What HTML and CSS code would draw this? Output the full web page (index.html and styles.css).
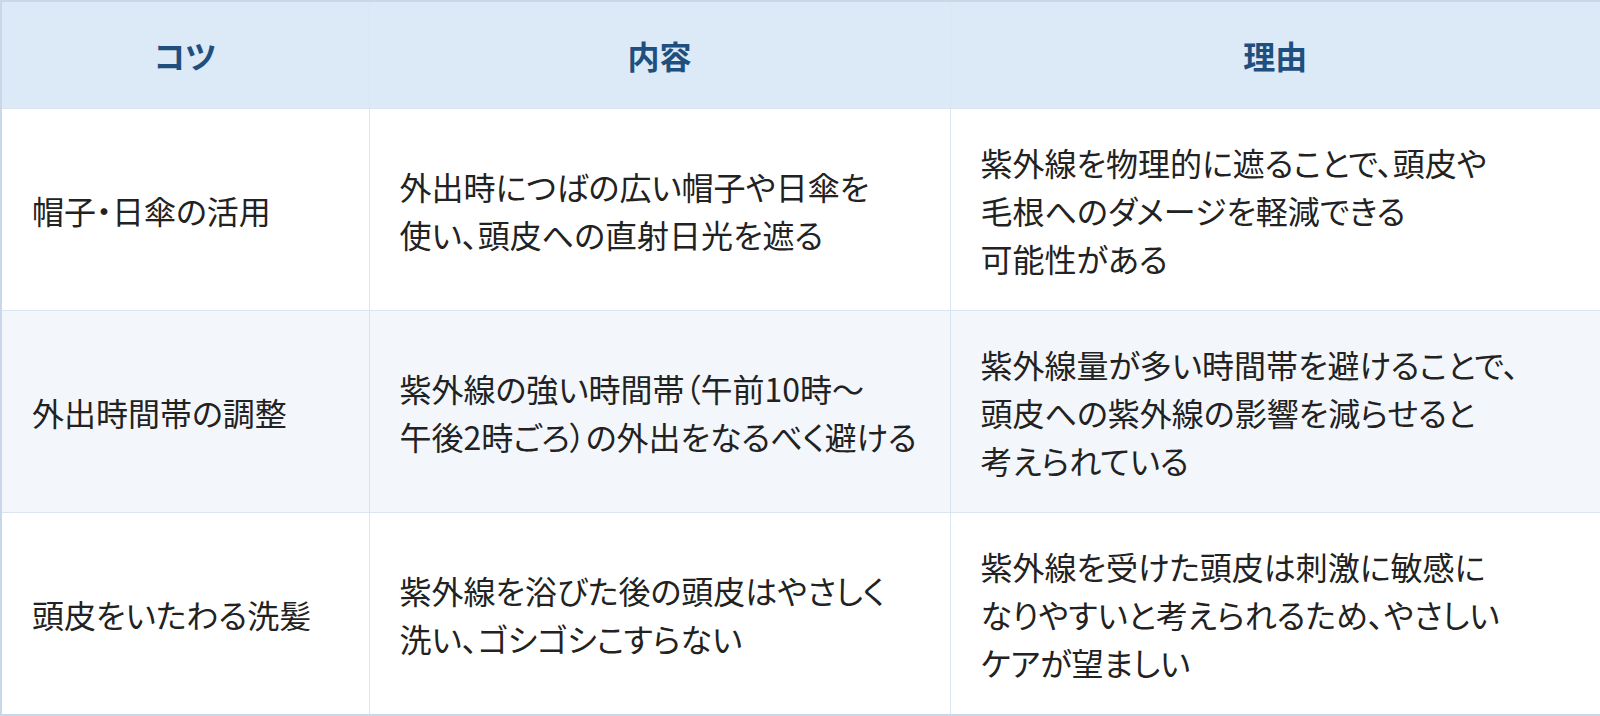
FILE: index.html
```html
<!DOCTYPE html>
<html lang="ja">
<head>
<meta charset="utf-8">
<link rel="stylesheet" href="styles.css">
</head>
<body>
<table class="tips">
  <colgroup>
    <col class="c1">
    <col class="c2">
    <col class="c3">
  </colgroup>
  <thead>
    <tr>
      <th>コツ</th>
      <th>内容</th>
      <th>理由</th>
    </tr>
  </thead>
  <tbody>
    <tr>
      <td>帽子・日傘の活用</td>
      <td>外出時につばの広い帽子や日傘を<br>使い、頭皮への直射日光を遮る</td>
      <td>紫外線を物理的に遮ることで、頭皮や<br>毛根へのダメージを軽減できる<br>可能性がある</td>
    </tr>
    <tr class="alt">
      <td>外出時間帯の調整</td>
      <td>紫外線の強い時間帯（午前10時～<br>午後2時ごろ）の外出をなるべく避ける</td>
      <td>紫外線量が多い時間帯を避けることで、<br>頭皮への紫外線の影響を減らせると<br>考えられている</td>
    </tr>
    <tr>
      <td>頭皮をいたわる洗髪</td>
      <td>紫外線を浴びた後の頭皮はやさしく<br>洗い、ゴシゴシこすらない</td>
      <td>紫外線を受けた頭皮は刺激に敏感に<br>なりやすいと考えられるため、やさしい<br>ケアが望ましい</td>
    </tr>
  </tbody>
</table>
</body>
</html>
```
FILE: styles.css
```css
html, body {
  margin: 0;
  padding: 0;
  background: #ffffff;
}

.tips {
  width: 1600px;
  border-collapse: collapse;
  table-layout: fixed;
  font-family: "Noto Sans CJK JP", "Noto Sans", sans-serif;
  font-size: 32px;
  line-height: 48px;
  color: #222222;
  font-feature-settings: "palt";
  border: 2px solid #c8d8e9;
}

.c1 { width: 368px; }
.c2 { width: 581px; }
.c3 { width: 651px; }

.tips th,
.tips td {
  border: 1px solid #d9e5f1;
  padding: 29px 30px 28px;
  vertical-align: middle;
  text-align: left;
  font-weight: 400;
}

.tips th {
  background: #dce9f6;
  color: #1f4f7e;
  font-weight: 700;
  text-align: center;
  padding: 29px 30px;
}

.tips td {
  background: #ffffff;
}

.tips tr.alt td {
  background: #f3f7fc;
}
```
